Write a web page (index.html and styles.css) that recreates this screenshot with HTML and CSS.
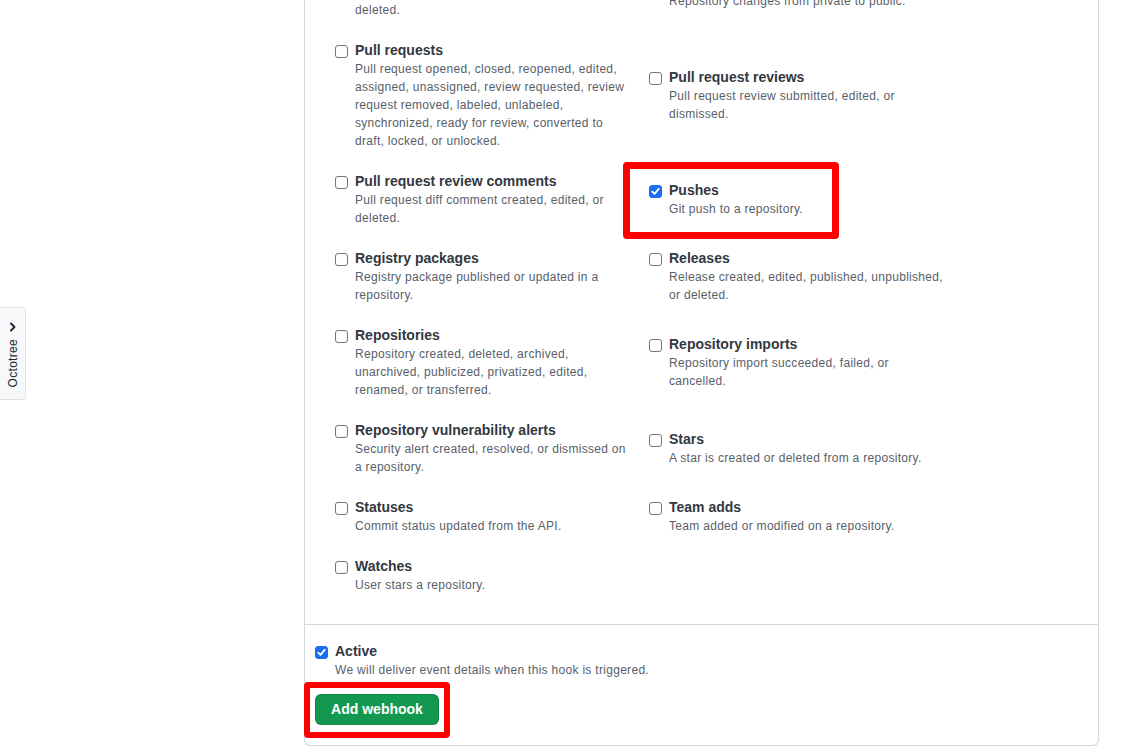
FILE: index.html
```html
<!DOCTYPE html>
<html lang="en">
<head>
<meta charset="utf-8">
<title>Add webhook</title>
<link rel="stylesheet" href="styles.css">
</head>
<body>
<aside class="octotree">
  <svg class="octotree-chev" width="8" height="10" viewBox="0 0 8 10"><path d="M2 1.5l3.5 3.5L2 8.5" fill="none" stroke="#24292f" stroke-width="2" stroke-linecap="round" stroke-linejoin="round"/></svg>
  <span class="octotree-label">Octotree</span>
</aside>

<main class="box">
  <div class="events">
    <div class="item">
      <span class="cb"></span>
      <div class="text"><div class="title">Projects</div><div class="desc">Project created, updated, closed, reopened, or<br>deleted.</div></div>
    </div>
    <div class="item">
      <span class="cb"></span>
      <div class="text"><div class="title">Public</div><div class="desc">Repository changes from private to public.</div></div>
    </div>

    <div class="item">
      <span class="cb"></span>
      <div class="text"><div class="title">Pull requests</div><div class="desc">Pull request opened, closed, reopened, edited,<br>assigned, unassigned, review requested, review<br>request removed, labeled, unlabeled,<br>synchronized, ready for review, converted to<br>draft, locked, or unlocked.</div></div>
    </div>
    <div class="item">
      <span class="cb"></span>
      <div class="text"><div class="title">Pull request reviews</div><div class="desc">Pull request review submitted, edited, or<br>dismissed.</div></div>
    </div>

    <div class="item">
      <span class="cb"></span>
      <div class="text"><div class="title">Pull request review comments</div><div class="desc">Pull request diff comment created, edited, or<br>deleted.</div></div>
    </div>
    <div class="item">
      <span class="cb checked"><svg width="9" height="9" viewBox="0 0 9 9"><path d="M1.3 4.6l2.2 2.2L7.7 1.8" fill="none" stroke="#fff" stroke-width="1.8" stroke-linecap="round" stroke-linejoin="round"/></svg></span>
      <div class="text"><div class="title">Pushes</div><div class="desc">Git push to a repository.</div></div>
      <span class="mark mark-pushes"></span>
    </div>

    <div class="item">
      <span class="cb"></span>
      <div class="text"><div class="title">Registry packages</div><div class="desc">Registry package published or updated in a<br>repository.</div></div>
    </div>
    <div class="item">
      <span class="cb"></span>
      <div class="text"><div class="title">Releases</div><div class="desc">Release created, edited, published, unpublished,<br>or deleted.</div></div>
    </div>

    <div class="item">
      <span class="cb"></span>
      <div class="text"><div class="title">Repositories</div><div class="desc">Repository created, deleted, archived,<br>unarchived, publicized, privatized, edited,<br>renamed, or transferred.</div></div>
    </div>
    <div class="item">
      <span class="cb"></span>
      <div class="text"><div class="title">Repository imports</div><div class="desc">Repository import succeeded, failed, or<br>cancelled.</div></div>
    </div>

    <div class="item">
      <span class="cb"></span>
      <div class="text"><div class="title">Repository vulnerability alerts</div><div class="desc">Security alert created, resolved, or dismissed on<br>a repository.</div></div>
    </div>
    <div class="item">
      <span class="cb"></span>
      <div class="text"><div class="title">Stars</div><div class="desc">A star is created or deleted from a repository.</div></div>
    </div>

    <div class="item">
      <span class="cb"></span>
      <div class="text"><div class="title">Statuses</div><div class="desc">Commit status updated from the API.</div></div>
    </div>
    <div class="item">
      <span class="cb"></span>
      <div class="text"><div class="title">Team adds</div><div class="desc">Team added or modified on a repository.</div></div>
    </div>

    <div class="item">
      <span class="cb"></span>
      <div class="text"><div class="title">Watches</div><div class="desc">User stars a repository.</div></div>
    </div>
  </div>

  <div class="footer">
    <div class="item">
      <span class="cb checked"><svg width="9" height="9" viewBox="0 0 9 9"><path d="M1.3 4.6l2.2 2.2L7.7 1.8" fill="none" stroke="#fff" stroke-width="1.8" stroke-linecap="round" stroke-linejoin="round"/></svg></span>
      <div class="text"><div class="title">Active</div><div class="desc">We will deliver event details when this hook is triggered.</div></div>
    </div>
    <div class="btn-wrap">
      <button class="btn" type="button">Add webhook</button>
      <span class="mark mark-btn"></span>
    </div>
  </div>
</main>
</body>
</html>
```

FILE: styles.css
```css
html, body {
  margin: 0;
  padding: 0;
  background: #ffffff;
}

body {
  font-family: "Liberation Sans", Arial, sans-serif;
  color: #24292f;
  overflow: hidden;
}

/* Octotree side tab */
.octotree {
  position: fixed;
  left: 0;
  top: 307px;
  width: 26px;
  height: 93px;
  box-sizing: border-box;
  background: #f6f8fa;
  border: 1px solid #dfe3e8;
  border-left: none;
  border-radius: 0 4px 4px 0;
  display: flex;
  flex-direction: column;
  align-items: center;
  padding-top: 14px;
}

.octotree-chev {
  display: block;
  margin-left: 1px;
}

.octotree-label {
  writing-mode: vertical-rl;
  transform: rotate(180deg);
  font-size: 12px;
  line-height: 14px;
  letter-spacing: 0.3px;
  color: #24292f;
  margin-top: 7px;
}

/* Main box */
.box {
  width: 795px;
  box-sizing: border-box;
  margin: -37px 0 0 304px;
  border: 1px solid #d0d7de;
  border-top: none;
  border-radius: 0 0 6px 6px;
}

.events {
  display: grid;
  grid-template-columns: 314px 314px;
  row-gap: 21px;
  align-items: center;
  padding: 0 0 30px 30px;
}

.item {
  position: relative;
  display: flex;
  align-items: flex-start;
}

.cb {
  flex: none;
  width: 13px;
  height: 13px;
  box-sizing: border-box;
  margin-top: 5px;
  margin-right: 7px;
  border: 1px solid #767676;
  border-radius: 3px;
  background: #fff;
  display: flex;
  align-items: center;
  justify-content: center;
}

.cb.checked {
  background: #1a6ef2;
  border-color: #1a6ef2;
}

.cb svg {
  display: block;
}

.title {
  font-size: 14px;
  line-height: 20px;
  font-weight: 700;
  color: #32383f;
}

.desc {
  font-size: 12px;
  line-height: 18px;
  letter-spacing: 0.3px;
  color: #57606a;
  white-space: nowrap;
}

/* Annotation frames */
.mark {
  position: absolute;
  box-sizing: border-box;
  border: 7px solid #ff0000;
  border-radius: 4px;
  pointer-events: none;
}

.mark-pushes {
  left: -26px;
  top: -18px;
  width: 216px;
  height: 77px;
}

.mark-btn {
  left: -11px;
  top: -12px;
  right: -11px;
  bottom: -13px;
  border-width: 6px;
}

/* Footer */
.footer {
  border-top: 1px solid #d0d7de;
  padding: 16px 10px 20px 10px;
}

.btn-wrap {
  position: relative;
  display: inline-block;
  margin-top: 15px;
  vertical-align: top;
}

.btn {
  display: block;
  height: 31px;
  width: 124px;
  box-sizing: border-box;
  padding: 0;
  border: 1px solid rgba(27, 31, 36, 0.15);
  border-radius: 6px;
  background: #12994f;
  color: #ffffff;
  font-family: "Liberation Sans", Arial, sans-serif;
  font-size: 14px;
  font-weight: 700;
  line-height: 29px;
  white-space: nowrap;
  text-align: center;
  cursor: pointer;
}
```
